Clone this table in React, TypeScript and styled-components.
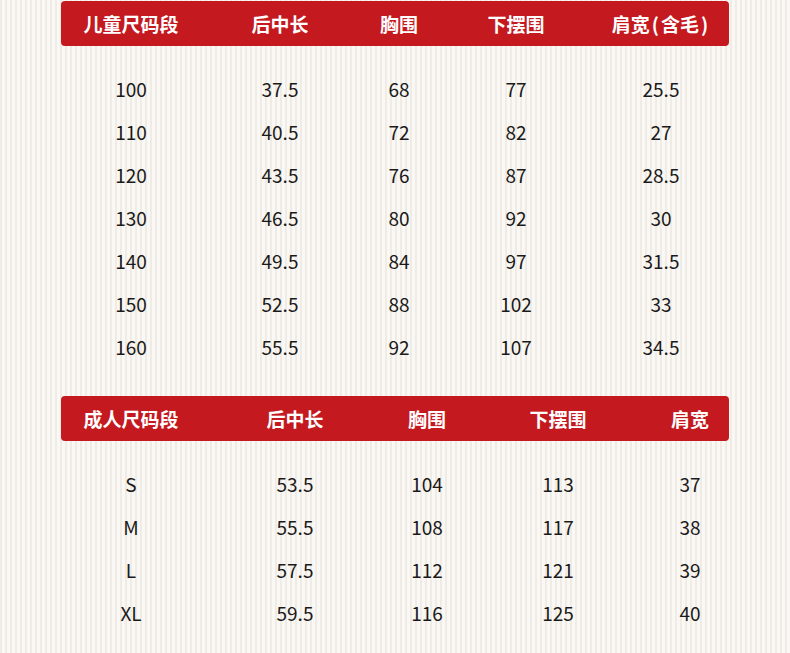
import styled, { createGlobalStyle } from "styled-components";

const Global = createGlobalStyle`
  html, body {
    margin: 0;
    padding: 0;
  }
  body {
    font-family: "Noto Sans CJK SC", "Noto Sans", sans-serif;
    background-color: #f8f6f1;
    background-image: repeating-linear-gradient(
      90deg,
      #f0ece5 0px,
      #f0ece5 2px,
      #faf8f4 2px,
      #faf8f4 5px
    );
  }
`;

const Page = styled.div`
  width: 790px;
  height: 653px;
  padding: 1px 61px 0;
  box-sizing: border-box;
  overflow: hidden;
`;

const Table = styled.section<{ $cols: string }>`
  display: grid;
  grid-template-columns: ${(p) => p.$cols};
  & + & {
    margin-top: 28px;
  }
`;

const HeadBar = styled.div`
  grid-column: 1 / -1;
  display: grid;
  grid-template-columns: subgrid;
  height: 45px;
  align-items: center;
  background: #c4191f;
  border-radius: 4px;
  margin-bottom: 21px;
`;

const HeadCell = styled.div`
  text-align: center;
  color: #fff;
  font-size: 19px;
  font-weight: 700;
  white-space: nowrap;
`;

const Paren = styled.span`
  margin: 0 2px;
`;

const Cell = styled.div`
  height: 43px;
  line-height: 43px;
  text-align: center;
  color: #1a1a1a;
  font-size: 19px;
  font-weight: 400;
`;

const kids = {
  cols: "140px 158px 80px 154px 136px",
  head: [
    "儿童尺码段",
    "后中长",
    "胸围",
    "下摆围",
    <>
      肩宽<Paren>(</Paren>含毛<Paren>)</Paren>
    </>,
  ],
  rows: [
    ["100", "37.5", "68", "77", "25.5"],
    ["110", "40.5", "72", "82", "27"],
    ["120", "43.5", "76", "87", "28.5"],
    ["130", "46.5", "80", "92", "30"],
    ["140", "49.5", "84", "97", "31.5"],
    ["150", "52.5", "88", "102", "33"],
    ["160", "55.5", "92", "107", "34.5"],
  ],
};

const adults = {
  cols: "140px 188px 76px 186px 78px",
  head: ["成人尺码段", "后中长", "胸围", "下摆围", "肩宽"],
  rows: [
    ["S", "53.5", "104", "113", "37"],
    ["M", "55.5", "108", "117", "38"],
    ["L", "57.5", "112", "121", "39"],
    ["XL", "59.5", "116", "125", "40"],
  ],
};

const SizeTable = ({ data }: { data: typeof kids }) => (
  <Table $cols={data.cols}>
    <HeadBar>
      {data.head.map((h, i) => (
        <HeadCell key={i}>{h}</HeadCell>
      ))}
    </HeadBar>
    {data.rows.map((r) => r.map((v, i) => <Cell key={r[0] + i}>{v}</Cell>))}
  </Table>
);

export default function App() {
  return (
    <>
      <Global />
      <Page>
        <SizeTable data={kids} />
        <SizeTable data={adults} />
      </Page>
    </>
  );
}
